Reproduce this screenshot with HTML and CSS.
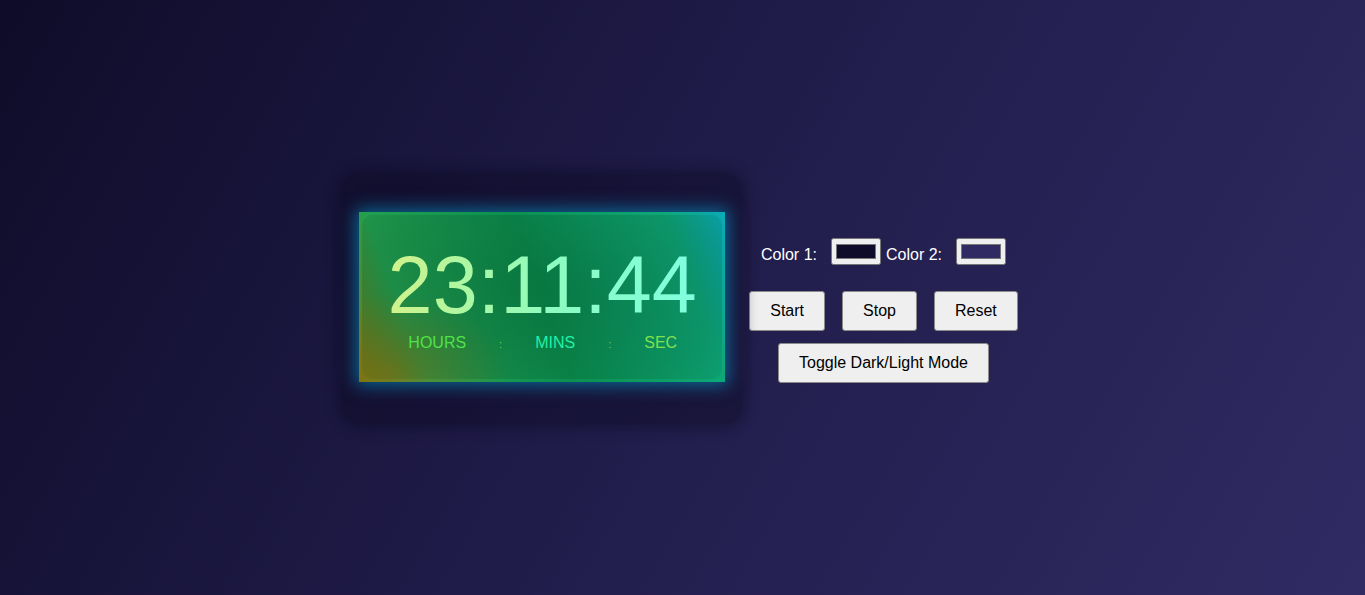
FILE: index.html
```html
<!DOCTYPE html>
<html lang="en">
<head>
<meta charset="utf-8">
<title>Digital Clock</title>
<link rel="stylesheet" href="styles.css">
</head>
<body>
  <main class="page">
    <section class="card">
      <div class="display">
        <div class="face">
          <div class="time">23:11:44</div>
          <div class="labels">
            <span class="lbl lbl-h">HOURS</span>
            <span class="sep">:</span>
            <span class="lbl lbl-m">MINS</span>
            <span class="sep">:</span>
            <span class="lbl lbl-s">SEC</span>
          </div>
        </div>
      </div>
    </section>
    <section class="controls">
      <div class="colors">
        <label class="clabel" for="c1">Color 1:</label>
        <input class="cinput cinput-1" id="c1" type="color" value="#0f0c29">
        <label class="clabel" for="c2">Color 2:</label>
        <input class="cinput" id="c2" type="color" value="#302b63">
      </div>
      <div class="buttons">
        <button class="btn">Start</button>
        <button class="btn">Stop</button>
        <button class="btn">Reset</button>
      </div>
      <button class="btn btn-toggle">Toggle Dark/Light Mode</button>
    </section>
  </main>
</body>
</html>
```
FILE: styles.css
```css
* { box-sizing: border-box; }
html, body { height: 100%; }
body {
  margin: 0;
  font-family: "Liberation Sans", Arial, sans-serif;
  background: linear-gradient(120deg, #0f0c29 0%, #1f1b48 45%, #302b63 100%);
  overflow: hidden;
}
.page {
  height: 595px;
  display: flex;
  align-items: center;
  justify-content: center;
  gap: 7px;
  padding-right: 5px;
}
.card {
  position: relative;
  z-index: 1;
  width: 400px;
  height: 250px;
  border-radius: 18px;
  background: rgba(6, 4, 22, 0.32);
  box-shadow: 0 0 14px 3px rgba(6, 4, 22, 0.4);
  display: flex;
  align-items: center;
  justify-content: center;
  margin-top: 2px;
}
.display {
  width: 366px;
  height: 170px;
  margin-top: -4px;
  background:
    radial-gradient(ellipse 120px 80px at 8% 95%, rgba(150, 110, 10, 0.55), rgba(150, 110, 10, 0) 100%),
    linear-gradient(70deg, #6e7a18 0%, #22a050 16%, #0b9050 50%, #0ea878 86%, #0aaab8 100%);
  box-shadow: 0 0 16px 3px rgba(0, 175, 225, 0.55);
  padding: 3px;
  display: flex;
}
.face {
  flex: 1;
  border-radius: 10px;
  background: radial-gradient(ellipse at 50% 45%, rgba(0, 45, 20, 0.26) 0%, rgba(0, 40, 20, 0.14) 75%, rgba(0, 40, 20, 0.07) 100%);
  display: flex;
  flex-direction: column;
  align-items: center;
  justify-content: flex-start;
  padding-top: 30px;
}
.time {
  font-size: 81px;
  line-height: 1;
  height: 81px;
  background: linear-gradient(90deg, #d2f28a 0%, #a6f8a8 30%, #8dfcc2 55%, #80ffe0 100%);
  -webkit-background-clip: text;
  background-clip: text;
  color: transparent;
}
.labels {
  display: flex;
  align-items: baseline;
  gap: 33px;
  font-size: 16px;
  line-height: 18px;
  margin-top: 8px;
  margin-left: 1px;
}
.lbl-h { color: #4fe34a; }
.lbl-m { color: #22f0a6; }
.lbl-s { color: #82e04e; }
.sep { color: #86c840; font-size: 11px; }
.controls {
  display: flex;
  flex-direction: column;
  align-items: center;
  margin-top: 26px;
}
.colors {
  display: flex;
  align-items: center;
  height: 27px;
  margin-bottom: 26px;
}
.clabel {
  color: #ffffff;
  font-size: 16px;
  margin-right: 14px;
  padding-top: 7px;
}
.cinput {
  width: 50px;
  height: 27px;
  margin: 0;
}
.cinput-1 { margin-right: 5px; }
.buttons {
  display: flex;
  gap: 17px;
  margin-bottom: 12px;
}
.btn {
  font-family: "Liberation Sans", Arial, sans-serif;
  font-size: 16px;
  line-height: 18px;
  height: 40px;
  padding: 10px 20px;
  color: #000;
  background: #efefef;
  border: 1px solid #8a8a8a;
  border-radius: 3px;
}
.btn-toggle { width: 211px; }
```
